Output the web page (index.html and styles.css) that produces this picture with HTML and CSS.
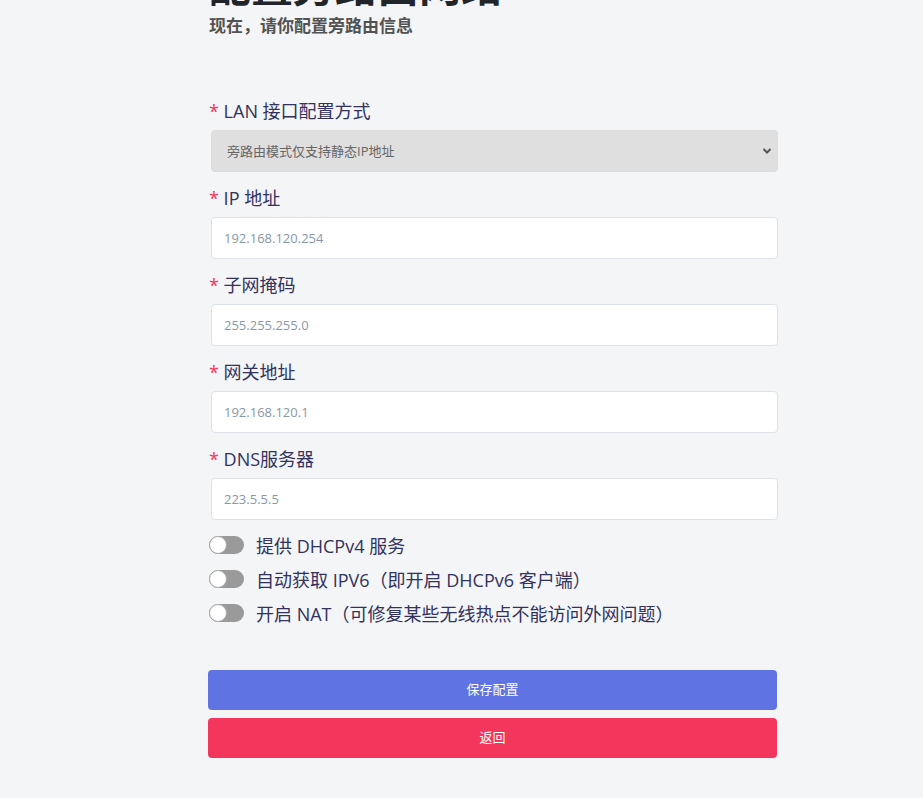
FILE: index.html
```html
<!DOCTYPE html>
<html lang="zh-CN">
<head>
<meta charset="utf-8">
<title>配置旁路由网络</title>
<link rel="stylesheet" href="styles.css">
</head>
<body>
<div class="page">
  <div class="head">
    <h1 class="title">配置旁路由网络</h1>
    <p class="subtitle">现在，请你配置旁路由信息</p>
  </div>
  <form class="form">
    <div class="field">
      <label class="label"><span class="req">*</span> LAN 接口配置方式</label>
      <div class="select-wrap">
        <select class="control select" disabled>
          <option>旁路由模式仅支持静态IP地址</option>
        </select>
        <svg class="chevron" width="10" height="8" viewBox="0 0 10 8"><path d="M1.5 2 L5 5.5 L8.5 2" fill="none" stroke="#555" stroke-width="2"/></svg>
      </div>
    </div>
    <div class="field">
      <label class="label"><span class="req">*</span> IP 地址</label>
      <input class="control input" placeholder="192.168.120.254">
    </div>
    <div class="field">
      <label class="label"><span class="req">*</span> 子网掩码</label>
      <input class="control input" placeholder="255.255.255.0">
    </div>
    <div class="field">
      <label class="label"><span class="req">*</span> 网关地址</label>
      <input class="control input" placeholder="192.168.120.1">
    </div>
    <div class="field">
      <label class="label"><span class="req">*</span> DNS服务器</label>
      <input class="control input" placeholder="223.5.5.5">
    </div>
    <div class="toggles">
      <div class="toggle-row"><span class="switch"><span class="knob"></span></span><span class="toggle-text">提供 DHCPv4 服务</span></div>
      <div class="toggle-row"><span class="switch"><span class="knob"></span></span><span class="toggle-text">自动获取 IPV6（即开启 DHCPv6 客户端）</span></div>
      <div class="toggle-row"><span class="switch"><span class="knob"></span></span><span class="toggle-text">开启 NAT（可修复某些无线热点不能访问外网问题）</span></div>
    </div>
    <div class="actions">
      <button type="button" class="btn btn-primary">保存配置</button>
      <button type="button" class="btn btn-danger">返回</button>
    </div>
  </form>
</div>
</body>
</html>
```

FILE: styles.css
```css
html, body {
  margin: 0;
  padding: 0;
  background: #f4f5f7;
}
body {
  font-family: "Open Sans", "Noto Sans CJK SC", sans-serif;
  color: #32325d;
  overflow: hidden;
}
.page {
  width: 569px;
  margin-left: 209px;
}
.head {
  margin-top: -36px;
}
.title {
  margin: 0 0 6px;
  font-size: 42px;
  line-height: 44px;
  font-weight: 700;
  color: #212529;
}
.subtitle {
  margin: 0;
  font-size: 17px;
  line-height: 24px;
  font-weight: 700;
  color: #525252;
}
.form {
  margin-top: 59px;
}
.field {
  margin-bottom: 12px;
}
.label {
  display: block;
  font-size: 18px;
  line-height: 28px;
  margin-bottom: 5px;
  color: #32325d;
}
.req {
  color: #f5365c;
}
.select-wrap {
  position: relative;
  margin-left: 2px;
}
.control {
  box-sizing: border-box;
  display: block;
  width: 567px;
  height: 42px;
  border-radius: 4px;
  font-family: "Open Sans", "Noto Sans CJK SC", sans-serif;
  font-size: 13px;
  outline: none;
}
.select {
  appearance: none;
  -webkit-appearance: none;
  background: #dfdfdf;
  border: 1px solid #dcdcdc;
  color: #666;
  padding: 0 30px 0 15px;
  opacity: 1;
}
.chevron {
  position: absolute;
  right: 6px;
  top: 17px;
}
.input {
  margin-left: 2px;
  background: #fff;
  border: 1px solid #dee2e6;
  padding: 0 12px;
  color: #32325d;
}
.input::placeholder {
  color: #8898aa;
}
.toggles {
  margin-top: -4px;
}
.toggle-row {
  display: flex;
  align-items: center;
  height: 34px;
  gap: 12px;
}
.switch {
  position: relative;
  display: block;
  width: 35px;
  height: 18px;
  border-radius: 9px;
  background: #9a9a9a;
}
.knob {
  position: absolute;
  left: 0;
  top: 0;
  box-sizing: border-box;
  width: 18px;
  height: 18px;
  border-radius: 50%;
  background: #fff;
  border: 1px solid #a8a8a8;
}
.toggle-text {
  font-size: 18px;
  color: #32325d;
}
.actions {
  margin-top: 40px;
  display: flex;
  flex-direction: column;
  gap: 8px;
}
.btn {
  display: block;
  box-sizing: border-box;
  width: 569px;
  margin-left: -1px;
  height: 40px;
  padding: 0 0 3px;
  border: 0;
  border-radius: 4px;
  color: #fff;
  font-family: "Open Sans", "Noto Sans CJK SC", sans-serif;
  font-size: 13px;
  cursor: pointer;
}
.btn-primary {
  background: #5f74e2;
}
.btn-danger {
  background: #f5365c;
}
```
